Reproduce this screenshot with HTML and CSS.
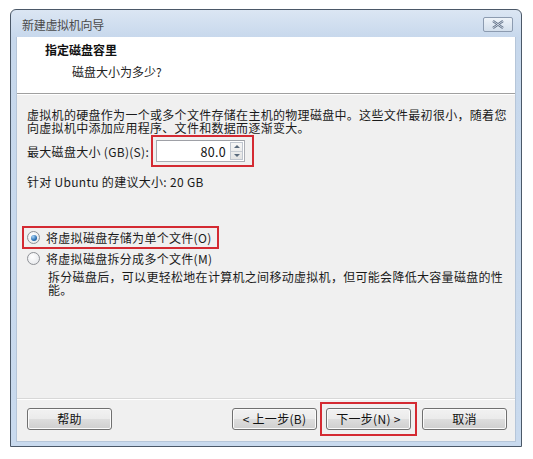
FILE: index.html
```html
<!DOCTYPE html>
<html lang="zh-CN">
<head>
<meta charset="utf-8">
<link rel="stylesheet" href="styles.css">
</head>
<body>
<div class="window">
  <div class="titlebar">
    <span class="title">新建虚拟机向导</span>
    <span class="close">
      <svg width="14" height="9" viewBox="0 0 14 9"><path d="M2 1 L12 8 M12 1 L2 8" stroke="#5c6d84" stroke-width="2.2" fill="none"/><path d="M2 1 L12 8 M12 1 L2 8" stroke="#e8eef6" stroke-width="0.8" fill="none"/></svg>
    </span>
  </div>
  <div class="client">
    <div class="header">
      <div class="h-title">指定磁盘容里</div>
      <div class="h-sub">磁盘大小为多少?</div>
    </div>
    <div class="content">
      <div class="desc">
        <span class="line">虚拟机的硬盘作为一个或多个文件存储在主机的物理磁盘中。这些文件最初很小，随着您</span>
        <span class="line">向虚拟机中添加应用程序、文件和数据而逐渐变大。</span>
      </div>
      <div class="size-row">
        <span class="label">最大磁盘大小 (GB)(S):</span>
        <span class="mark">
          <span class="spin-input">
            <span class="value">80.0</span>
            <span class="spinner">
              <span class="arrow up"></span>
              <span class="arrow down"></span>
            </span>
          </span>
        </span>
      </div>
      <div class="recommend">针对 Ubuntu 的建议大小: 20 GB</div>
      <div class="options">
        <div class="radio-row marked"><span class="radio checked"></span><span>将虚拟磁盘存储为单个文件(O)</span></div>
        <div class="radio-row"><span class="radio"></span><span>将虚拟磁盘拆分成多个文件(M)</span></div>
        <div class="split-desc">
          <span class="line">拆分磁盘后，可以更轻松地在计算机之间移动虚拟机，但可能会降低大容量磁盘的性</span>
          <span class="line">能。</span>
        </div>
      </div>
    </div>
    <div class="footer">
      <button class="btn">帮助</button>
      <div class="spacer"></div>
      <button class="btn">&lt; 上一步(B)</button>
      <span class="next-mark"><button class="btn">下一步(N) &gt;</button></span>
      <button class="btn">取消</button>
    </div>
  </div>
</div>
</body>
</html>
```
FILE: styles.css
```css
html, body {
  margin: 0;
  padding: 0;
  background: #ffffff;
}
body {
  font-family: "Noto Sans CJK SC", "Noto Sans", sans-serif;
  font-size: 12px;
  color: #1a1a1a;
}
.window {
  box-sizing: border-box;
  margin: 9px 0 0 10px;
  width: 512px;
  height: 438px;
  border: 1px solid #4b5868;
  border-radius: 6px 6px 0 0;
  background: linear-gradient(#dbe6f3 0px, #c7d8ec 28px, #c9daee 100%);
  padding: 0 5px 4px 5px;
  display: flex;
  flex-direction: column;
}
.titlebar {
  height: 27px;
  flex: none;
  display: flex;
  align-items: center;
  justify-content: space-between;
  padding: 0 3px 0 6px;
}
.title {
  color: #4a4a4a;
  font-size: 12px;
  letter-spacing: -0.3px;
  padding-top: 1px;
}
.close {
  width: 28px;
  height: 13px;
  border: 1px solid #8c9bb0;
  border-radius: 2px;
  background: linear-gradient(#eef3f9, #d3dfec);
  display: flex;
  align-items: center;
  justify-content: center;
  margin-top: 2px;
}
.client {
  flex: 1;
  background: #f0f0f0;
  display: flex;
  flex-direction: column;
  border: 1px solid #b6c6d9;
  border-top: none;
}
.header {
  height: 57px;
  flex: none;
  background: #ffffff;
  border-bottom: 1px solid #a0a0a0;
  box-shadow: 0 1px 0 #ffffff;
  padding: 6px 0 0 28px;
  box-sizing: border-box;
}
.h-title {
  font-weight: bold;
  line-height: 14px;
  color: #111;
}
.h-sub {
  margin: 8px 0 0 27px;
  line-height: 14px;
  color: #222;
}
.content {
  flex: 1;
  padding: 14px 0 0 10px;
  letter-spacing: 0.3px;
}
.line {
  display: block;
  height: 13px;
  line-height: 13px;
  overflow: visible;
  white-space: nowrap;
}
.size-row {
  display: flex;
  align-items: center;
  margin-top: 3px;
}
.label {
  padding-top: 1px;
}
.mark {
  margin-left: 4px;
  outline: 2px solid #d42a32;
  padding: 3px 7px 3px 3px;
  display: flex;
}
.spin-input {
  width: 89px;
  height: 22px;
  box-sizing: border-box;
  border: 1px solid #abadb3;
  border-top-color: #9ea0a6;
  background: #fff;
  display: flex;
  align-items: center;
  justify-content: flex-end;
  padding: 1px;
}
.value {
  margin-right: 4px;
  font-size: 12.5px;
  color: #111;
}
.spinner {
  width: 13px;
  height: 18px;
  display: flex;
  flex-direction: column;
  border: 1px solid #c0c6cf;
  box-sizing: border-box;
  background: linear-gradient(#f6f6f6, #e4e4e4);
}
.arrow {
  flex: 1;
  display: flex;
  align-items: center;
  justify-content: center;
}
.arrow.up { border-bottom: 1px solid #c8cdd4; }
.arrow::before {
  content: "";
  border-left: 3px solid transparent;
  border-right: 3px solid transparent;
}
.arrow.up::before { border-bottom: 3px solid #5a6a7c; }
.arrow.down::before { border-top: 3px solid #5a6a7c; }
.recommend {
  margin-top: 11px;
  line-height: 12px;
}
.options {
  margin-top: 39px;
  margin-left: -4px;
}
.radio-row {
  display: flex;
  align-items: center;
  height: 20px;
  width: 190px;
  padding-left: 1px;
  box-sizing: border-box;
}
.radio-row.marked {
  outline: 2px solid #d42a32;
  outline-offset: -1px;
  height: 21px;
  width: 195px;
}
.radio {
  width: 11px;
  height: 11px;
  border-radius: 50%;
  border: 1px solid #8e9196;
  background: radial-gradient(circle at 40% 35%, #ffffff, #e2e4e8);
  margin: 0 6px 0 3px;
  display: inline-flex;
  align-items: center;
  justify-content: center;
  flex: none;
}
.radio.checked::after {
  content: "";
  width: 6px;
  height: 6px;
  border-radius: 50%;
  background: radial-gradient(circle at 35% 30%, #a9d4f7, #2a6fb2 60%, #164f8c);
}
.split-desc {
  margin: 2px 0 0 25px;
}
.footer {
  height: 43px;
  flex: none;
  border-top: 1px solid #d8d8d8;
  box-shadow: inset 0 1px 0 #ffffff;
  display: flex;
  align-items: flex-start;
  padding: 9px 8px 0 10px;
  box-sizing: border-box;
  gap: 11px;
}
.spacer { flex: 1; }
.btn {
  width: 85px;
  height: 22px;
  border: 1px solid #707070;
  border-radius: 3px;
  background: linear-gradient(#f2f2f2 0%, #ebebeb 48%, #dddddd 52%, #cfcfcf 100%);
  box-shadow: inset 0 0 0 1px #fbfbfb;
  font-family: inherit;
  font-size: 12px;
  color: #111;
  padding: 0;
  line-height: 18px;
  letter-spacing: 0.3px;
}
.next-mark {
  outline: 2px solid #d42a32;
  outline-offset: 4px;
  display: flex;
  margin-left: -2px;
}
```
